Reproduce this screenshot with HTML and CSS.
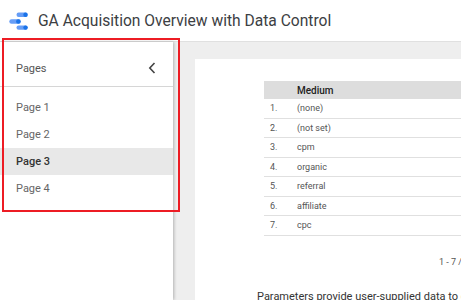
FILE: index.html
```html
<!DOCTYPE html>
<html lang="en">
<head>
    <meta charset="UTF-8">
    <title>GA Acquisition Overview with Data Control</title>
    <link rel="stylesheet" href="styles.css">
</head>
<body>

    <!-- Header -->
    <header class="topbar">
        <svg class="logo" width="20" height="19" viewBox="0 0 20 19">
            <rect x="7.5" y="0.6" width="11.2" height="4.4" rx="2.2" fill="#669df6"/>
            <circle cx="16.5" cy="2.8" r="2.2" fill="#1a73e8"/>
            <rect x="0.3" y="7.2" width="11.4" height="4.6" rx="2.3" fill="#669df6"/>
            <circle cx="9.4" cy="9.5" r="2.3" fill="#1a73e8"/>
            <rect x="7.5" y="13.4" width="11.2" height="4.4" rx="2.2" fill="#669df6"/>
            <circle cx="16.5" cy="15.6" r="2.2" fill="#1a73e8"/>
        </svg>
        <h1 class="title">GA Acquisition Overview with Data Control</h1>
    </header>

    <div class="main">
        <!-- Pages panel -->
        <aside class="sidebar">
            <div class="sidebar-head">
                <span>Pages</span>
                <svg class="chevron" width="8" height="12" viewBox="0 0 8 12">
                    <path d="M6.5 1 L1.8 6 L6.5 11" fill="none" stroke="#444" stroke-width="1.6"/>
                </svg>
            </div>
            <ul class="page-list">
                <li>Page 1</li>
                <li>Page 2</li>
                <li class="active">Page 3</li>
                <li>Page 4</li>
            </ul>
        </aside>

        <!-- Report canvas -->
        <section class="content">
            <div class="report">
                <table class="data-table">
                    <thead>
                        <tr><th class="num"></th><th>Medium</th></tr>
                    </thead>
                    <tbody>
                        <tr><td class="num">1.</td><td>(none)</td></tr>
                        <tr><td class="num">2.</td><td>(not set)</td></tr>
                        <tr><td class="num">3.</td><td>cpm</td></tr>
                        <tr><td class="num">4.</td><td>organic</td></tr>
                        <tr><td class="num">5.</td><td>referral</td></tr>
                        <tr><td class="num">6.</td><td>affiliate</td></tr>
                        <tr><td class="num">7.</td><td>cpc</td></tr>
                    </tbody>
                </table>
                <div class="pager">1 - 7 / 7</div>
                <p class="note">Parameters provide user-supplied data to calculated fields and data sources.</p>
            </div>
        </section>
    </div>

    <div class="highlight"></div>

</body>
</html>
```

FILE: styles.css
```css
body {
    font-family: Roboto, "Liberation Sans", sans-serif;
    margin: 0;
    padding: 0;
    width: 461px;
    height: 300px;
    overflow: hidden;
    background-color: #fff;
    position: relative;
}

/* Header */
.topbar {
    height: 42px;
    display: flex;
    align-items: center;
    padding-left: 9px;
    border-bottom: 1px solid #e0e0e0;
    box-sizing: border-box;
}

.logo {
    margin-top: 1px;
}

.title {
    margin: 0 0 0 9px;
    font-size: 15.6px;
    font-weight: 400;
    color: #3c4043;
    white-space: nowrap;
}

.main {
    display: flex;
    height: 258px;
}

/* Pages panel */
.sidebar {
    width: 173px;
    flex-shrink: 0;
    background: #fff;
    box-shadow: 1px 0 3px rgba(0, 0, 0, 0.25);
    position: relative;
    z-index: 1;
}

.sidebar-head {
    height: 45px;
    display: flex;
    justify-content: space-between;
    align-items: center;
    padding: 8px 17px 0 16px;
    box-sizing: border-box;
    border-bottom: 1px solid #d6d6d6;
    font-size: 11px;
    color: #555;
}

.page-list {
    list-style: none;
    margin: 0;
    padding: 7px 0 0;
}

.page-list li {
    height: 27px;
    line-height: 28px;
    padding-left: 16px;
    font-size: 11px;
    color: #666;
}

.page-list li.active {
    background: #e8e8e8;
    color: #333;
    font-weight: 500;
}

/* Report canvas */
.content {
    flex: 1;
    background: #eeeeee;
    padding: 17px 0 0 22px;
    overflow: hidden;
}

.report {
    background: #fff;
    height: 100%;
    padding: 22px 0 0 62px;
    box-sizing: border-box;
    overflow: hidden;
    white-space: nowrap;
}

.data-table {
    margin-left: 7px;
    width: 320px;
    border-collapse: collapse;
    font-size: 9px;
    color: #555;
}

.data-table th {
    background: #dddddd;
    height: 18px;
    padding: 0;
    text-align: left;
    font-size: 10px;
    font-weight: 500;
    color: #222;
}

.data-table td {
    height: 18.5px;
    padding: 0;
    border-bottom: 1px solid #e0e0e0;
}

.data-table .num {
    width: 33px;
    padding-left: 6px;
    box-sizing: border-box;
}

.pager {
    margin: 20px 0 0 182px;
    font-size: 9px;
    color: #555;
    line-height: 12px;
}

.note {
    margin: 22px 0 0;
    font-size: 11px;
    color: #333;
    line-height: 14px;
}

/* red annotation box over the pages panel */
.highlight {
    position: absolute;
    left: 2px;
    top: 38px;
    width: 174px;
    height: 170px;
    border: 2px solid #ed1c24;
    z-index: 5;
}
```
